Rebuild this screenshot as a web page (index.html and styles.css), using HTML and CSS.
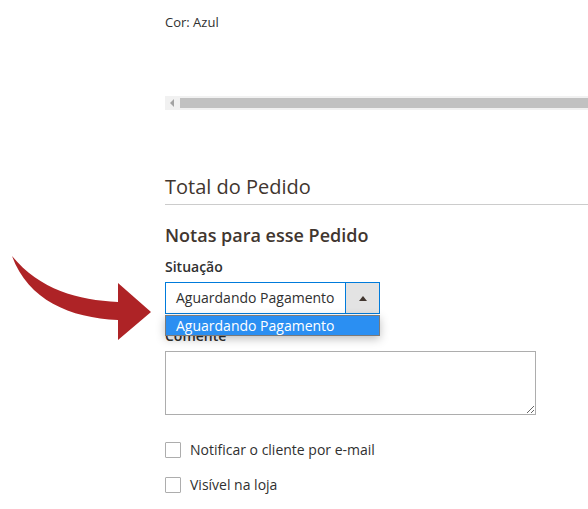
FILE: index.html
```html
<!DOCTYPE html>
<html lang="pt">
<head>
<meta charset="utf-8">
<link rel="stylesheet" href="styles.css">
</head>
<body>
<div class="page">
  <div class="arrow">
    <svg width="160" height="100" viewBox="0 250 160 100">
      <path d="M12,256 C40,290 78,300 118,302 L118,283 L151,312 L118,340 L118,320 C70,318 28,300 12,256 Z" fill="#ae2326"/>
    </svg>
  </div>
  <div class="content">
    <div class="attr">Cor: Azul</div>
    <div class="hscroll">
      <span class="hs-arrow"></span>
      <span class="hs-thumb"></span>
    </div>
    <h2 class="section-title">Total do Pedido</h2>
    <h3 class="notes-title">Notas para esse Pedido</h3>
    <div class="field">
      <label class="field-label">Situação</label>
      <div class="select-wrap">
        <div class="select">
          <span class="select-value">Aguardando Pagamento</span>
          <span class="select-btn"><span class="tri"></span></span>
        </div>
        <div class="dropdown">
          <div class="option selected">Aguardando Pagamento</div>
        </div>
      </div>
    </div>
    <div class="field comment">
      <label class="field-label">Comente</label>
      <textarea class="textarea"></textarea>
    </div>
    <div class="check-row">
      <span class="checkbox"></span>
      <span class="check-label">Notificar o cliente por e-mail</span>
    </div>
    <div class="check-row">
      <span class="checkbox"></span>
      <span class="check-label">Visível na loja</span>
    </div>
  </div>
</div>
</body>
</html>
```

FILE: styles.css
```css
html, body {
  margin: 0;
  padding: 0;
  background: #fff;
  overflow: hidden;
}
body {
  font-family: "Open Sans", "Noto Sans", sans-serif;
  color: #41362f;
}
.page {
  position: relative;
  width: 588px;
  height: 509px;
  overflow: hidden;
}
.arrow {
  position: absolute;
  left: 0;
  top: 250px;
  z-index: 3;
}
.arrow svg {
  display: block;
}
.content {
  padding-left: 165px;
  display: flex;
  flex-direction: column;
}
.attr {
  font-size: 13px;
  line-height: 18px;
  color: #303030;
  margin-top: 13px;
}
.hscroll {
  margin-top: 65px;
  height: 14px;
  width: 440px;
  background: #f1f1f1;
  display: flex;
  align-items: center;
}
.hs-arrow {
  width: 0;
  height: 0;
  margin-left: 5px;
  border-top: 4px solid transparent;
  border-bottom: 4px solid transparent;
  border-right: 4px solid #a3a3a3;
}
.hs-thumb {
  margin-left: 6px;
  height: 10px;
  flex: 1;
  background: #c1c1c1;
}
.section-title {
  margin: 63px 0 0;
  font-size: 20px;
  font-weight: 400;
  line-height: 28px;
  padding-bottom: 3px;
  border-bottom: 1px solid #cccccc;
  width: 440px;
  color: #41362f;
}
.notes-title {
  margin: 18px 0 0;
  font-size: 18px;
  font-weight: 600;
  line-height: 24px;
  color: #41362f;
}
.field {
  display: flex;
  flex-direction: column;
}
.field-label {
  font-size: 14px;
  font-weight: 600;
  line-height: 20px;
  margin-top: 10px;
  color: #303030;
}
.select-wrap {
  position: relative;
  margin-top: 5px;
  width: 215px;
}
.select {
  display: flex;
  height: 30px;
  border: 1px solid #007bdb;
  background: #fff;
}
.select-value {
  flex: 1;
  font-size: 14px;
  line-height: 30px;
  padding-left: 10px;
  color: #303030;
}
.select-btn {
  width: 33px;
  border-left: 1px solid #007bdb;
  background: #e3e3e3;
  display: flex;
  align-items: center;
  justify-content: center;
}
.tri {
  width: 0;
  height: 0;
  border-left: 4px solid transparent;
  border-right: 4px solid transparent;
  border-bottom: 5px solid #41362f;
}
.dropdown {
  position: absolute;
  left: 0;
  top: 33px;
  width: 215px;
  background: #fff;
  box-shadow: 0 3px 10px rgba(0, 0, 0, 0.25);
  z-index: 2;
  border: 1px solid #7a7a7a;
  box-sizing: border-box;
}
.option {
  font-size: 14px;
  line-height: 19px;
  padding-left: 10px;
  color: #303030;
}
.option.selected {
  background: #2b8ff2;
  color: #fff;
}
.comment .field-label {
  margin-top: 12px;
}
.textarea {
  margin-top: 5px;
  width: 371px;
  height: 64px;
  box-sizing: border-box;
  border: 1px solid #adadad;
  padding: 4px;
  font-family: inherit;
  resize: both;
}
.check-row {
  display: flex;
  align-items: center;
  gap: 9px;
  height: 20px;
  margin-top: 15px;
}
.check-row + .check-row {
  margin-top: 15px;
}
.comment + .check-row {
  margin-top: 25px;
}
.checkbox {
  width: 16px;
  height: 16px;
  box-sizing: border-box;
  border: 1px solid #adadad;
  border-radius: 1px;
  background: #fff;
}
.check-label {
  font-size: 14px;
  line-height: 20px;
  color: #303030;
}
```
